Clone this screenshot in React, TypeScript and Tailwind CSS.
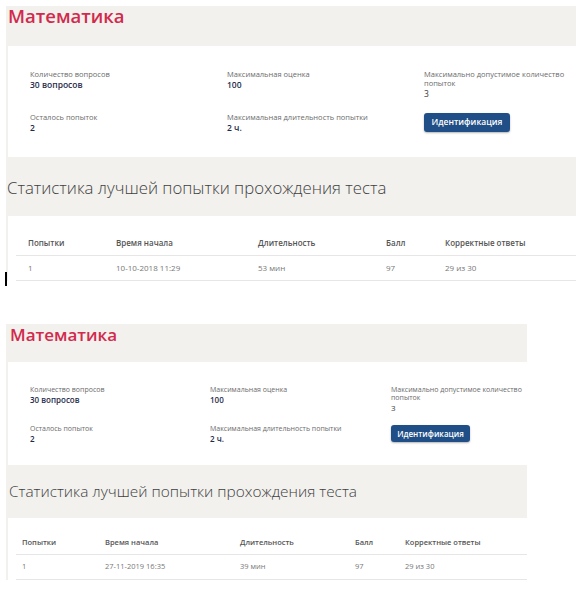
import React from "react";

// Size settings for one screenshot block (the two copies differ slightly in scale)
type Sizes = {
  wrap: string;
  header: string;
  title: string;
  card: string;
  grid: string;
  label: string;
  value: string;
  wide: string;
  button: string;
  band: string;
  heading: string;
  tableWrap: string;
  headRow: string;
  bodyRow: string;
  th: string;
  td: string;
  cols: string[];
};

const topSizes: Sizes = {
  wrap: "ml-[6px] mt-[6px] w-[570px]",
  header: "h-[40px] bg-[#f2f1ee] pl-[2px]",
  title: "text-[18.5px] leading-[20px] font-semibold",
  card: "ml-[2px] h-[111px] bg-white pl-[22px] pt-[24px]",
  grid: "grid grid-cols-[197px_197px_197px] gap-y-[13px]",
  label: "text-[7.5px] leading-[9px]",
  value: "text-[8.5px] leading-[12px]",
  wide: "w-[142px]",
  button: "h-[19px] w-[86px] text-[8.5px] rounded-[3px]",
  band: "h-[59px] pl-[1px] pt-[3px]",
  heading: "text-[16.8px]",
  tableWrap: "ml-[2px] pl-[8px] pt-[14px]",
  headRow: "h-[26px]",
  bodyRow: "h-[25px]",
  th: "text-[8px]",
  td: "text-[8px]",
  cols: ["w-[100px] pl-[12px]", "w-[142px]", "w-[128px]", "w-[59px]", "flex-1"],
};

const bottomSizes: Sizes = {
  wrap: "ml-[6px] mt-[43px] w-[521px]",
  header: "h-[38px] bg-[#f2f1ee] pl-[4px]",
  title: "text-[17px] leading-[22px] font-semibold",
  card: "ml-[2px] h-[103px] bg-white pl-[22px] pt-[24px]",
  grid: "grid grid-cols-[180px_181px_181px] gap-y-[12px]",
  label: "text-[7px] leading-[8px]",
  value: "text-[8px] leading-[11px]",
  wide: "w-[140px]",
  button: "h-[17px] w-[79px] text-[8px] rounded-[3px]",
  band: "h-[53px] pl-[3px] pt-[1px]",
  heading: "text-[15.4px]",
  tableWrap: "ml-[2px] pl-[8px] pt-[13px]",
  headRow: "h-[24px]",
  bodyRow: "h-[25px]",
  th: "text-[7.5px]",
  td: "text-[7.5px]",
  cols: ["w-[89px] pl-[6px]", "w-[135px]", "w-[115px]", "w-[50px]", "flex-1"],
};

type Attempt = {
  attempt: string;
  started: string;
  duration: string;
  score: string;
  correct: string;
};

const InfoItem = ({
  s,
  label,
  value,
}: {
  s: Sizes;
  label: string;
  value: string;
}) => (
  <div>
    <div className={`${s.label} text-[#6b6b6b]`}>{label}</div>
    <div className={`${s.value} font-semibold text-[#1f2b4b]`}>{value}</div>
  </div>
);

const TestBlock = ({ s, row }: { s: Sizes; row: Attempt }) => {
  const headers = ["Попытки", "Время начала", "Длительность", "Балл", "Корректные ответы"];
  const cells = [row.attempt, row.started, row.duration, row.score, row.correct];

  return (
    <div className={`${s.wrap} bg-[#f2f1ee]`}>
      {/* Title */}
      <div className={s.header}>
        <h1 className={`${s.title} text-[#d12a4c]`}>Математика</h1>
      </div>

      {/* Test info */}
      <div className={s.card}>
        <div className={s.grid}>
          <InfoItem s={s} label="Количество вопросов" value="30 вопросов" />
          <InfoItem s={s} label="Максимальная оценка" value="100" />
          <div className={s.wide}>
            <div className={`${s.label} text-[#6b6b6b]`}>
              Максимально допустимое количество попыток
            </div>
            <div className={`${s.value} text-[#3a3a3a]`}>3</div>
          </div>
          <InfoItem s={s} label="Осталось попыток" value="2" />
          <InfoItem s={s} label="Максимальная длительность попытки" value="2 ч." />
          <div>
            <button
              className={`${s.button} flex items-center justify-center bg-[#1f4f86] font-semibold text-white shadow-[0_1px_2px_rgba(0,0,0,0.3)]`}
            >
              Идентификация
            </button>
          </div>
        </div>
      </div>

      {/* Best attempt */}
      <div className={`${s.band} flex items-center`}>
        <h2 className={`${s.heading} font-light text-[#3f3f3f]`}>
          Статистика лучшей попытки прохождения теста
        </h2>
      </div>

      <div className={`${s.tableWrap} bg-white`}>
        <div className={`${s.headRow} flex items-center border-b border-[#e6e6e6]`}>
          {headers.map((h, i) => (
            <div key={h} className={`${s.cols[i]} ${s.th} font-semibold text-[#555555]`}>
              {h}
            </div>
          ))}
        </div>
        <div className={`${s.bodyRow} flex items-center border-b border-[#e6e6e6]`}>
          {cells.map((c, i) => (
            <div key={i} className={`${s.cols[i]} ${s.td} text-[#777777]`}>
              {c}
            </div>
          ))}
        </div>
      </div>
    </div>
  );
};

export default function App() {
  return (
    <div
      className="relative h-[600px] w-[576px] overflow-hidden bg-white"
      style={{ fontFamily: '"Open Sans", "Noto Sans", sans-serif' }}
    >
      <TestBlock
        s={topSizes}
        row={{
          attempt: "1",
          started: "10-10-2018 11:29",
          duration: "53 мин",
          score: "97",
          correct: "29 из 30",
        }}
      />
      <TestBlock
        s={bottomSizes}
        row={{
          attempt: "1",
          started: "27-11-2019 16:35",
          duration: "39 мин",
          score: "97",
          correct: "29 из 30",
        }}
      />
      {/* text cursor left in the capture */}
      <div className="absolute left-[5px] top-[272px] h-[14px] w-[1.5px] bg-black" />
    </div>
  );
}
